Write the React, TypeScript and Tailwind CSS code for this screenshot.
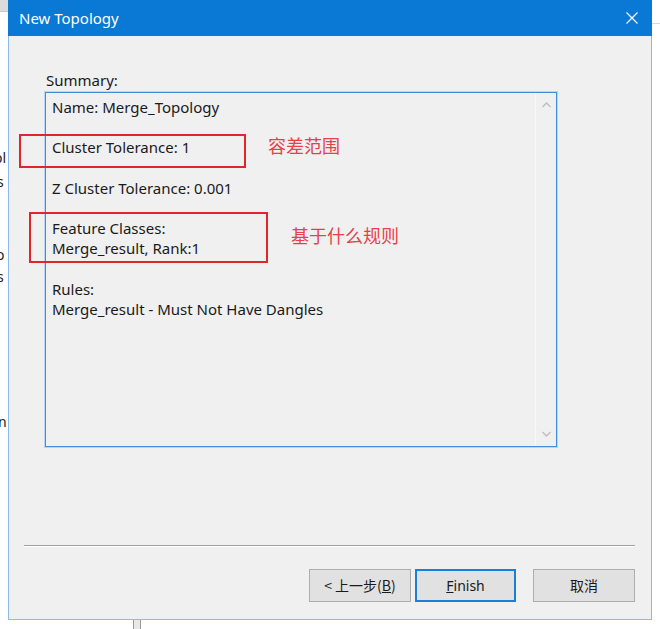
import React from "react";

const ui = { fontFamily: '"Noto Sans", "Open Sans", Arial, sans-serif' };
const cjk = { fontFamily: '"Noto Sans CJK SC", "Noto Sans", sans-serif' };

export default function App() {
  return (
    <div className="relative w-[660px] h-[629px] overflow-hidden bg-white" style={ui}>
      {/* background window fragments */}
      <div className="absolute left-0 top-0 w-[10px] h-[12px] bg-[#dcdcdc] border-b border-[#c8c8c8]" />
      <div className="absolute left-[652px] top-[23px] w-[8px] h-px bg-[#d8d8d8]" />
      <div className="absolute left-[-6px] top-[148px] text-[14px] leading-[20px] text-[#222]">ol</div>
      <div className="absolute left-[-3px] top-[172px] text-[14px] leading-[20px] text-[#222]">s</div>
      <div className="absolute left-[-4px] top-[245px] text-[14px] leading-[20px] text-[#222]">o</div>
      <div className="absolute left-[-3px] top-[267px] text-[14px] leading-[20px] text-[#222]">s</div>
      <div className="absolute left-[-2px] top-[412px] text-[14px] leading-[20px] text-[#222]">n</div>
      <div className="absolute left-[133px] top-[620px] w-[8px] h-[12px] border-x border-[#9a9a9a] bg-[#e8e8e8]" />

      {/* dialog */}
      <div className="absolute left-[8px] top-0 w-[644px] h-[620px] border border-t-0 border-[#8dbbe9] bg-[#f0f0f0] flex flex-col">
        <div className="h-[36px] bg-[#0a78d5] flex items-center justify-between pl-[11px] pr-[14px] -mx-px">
          <span className="text-white text-[15px] leading-none">New Topology</span>
          <svg width="12" height="12" viewBox="0 0 12 12">
            <path d="M0.5 0.5 L11.5 11.5 M11.5 0.5 L0.5 11.5" stroke="white" strokeWidth="1.2" />
          </svg>
        </div>

        <div className="flex-1 flex flex-col pt-[34px]">
          <div className="pl-[37px] text-[15px] leading-[20px] text-[#1a1a1a]">Summary:</div>
          <div className="ml-[36px] mt-[2px] w-[512px] h-[355px] border border-[#3f8ee0] outline outline-1 outline-[#b8d6f3] flex">
            <div className="flex-1 pl-[6px] pt-[4px] text-[15px] leading-[20.2px] text-[#1a1a1a]">
              <div>Name: Merge_Topology</div>
              <div className="h-[20.2px]" />
              <div>Cluster Tolerance: 1</div>
              <div className="h-[20.2px]" />
              <div>Z Cluster Tolerance: 0.001</div>
              <div className="h-[20.2px]" />
              <div>Feature Classes:</div>
              <div>Merge_result, Rank:1</div>
              <div className="h-[20.2px]" />
              <div>Rules:</div>
              <div>Merge_result - Must Not Have Dangles</div>
            </div>
            <div className="w-[21px] border-l border-[#f8f8f8] bg-[#f0f0f0] flex flex-col items-center justify-between py-[9px]">
              <svg width="9" height="6" viewBox="0 0 9 6">
                <path d="M0.5 5 L4.5 1 L8.5 5" fill="none" stroke="#bdbdbd" strokeWidth="1.3" />
              </svg>
              <svg width="9" height="6" viewBox="0 0 9 6">
                <path d="M0.5 1 L4.5 5 L8.5 1" fill="none" stroke="#bdbdbd" strokeWidth="1.3" />
              </svg>
            </div>
          </div>

          <div className="mt-[98px] mx-[15px] mr-[16px] h-px bg-[#a0a0a0] border-b border-white box-content" />

          <div className="mt-[22px] flex justify-end pr-[16px] text-[14px] text-[#1a1a1a]">
            <button className="w-[102px] h-[33px] bg-[#e1e1e1] border border-[#adadad] flex items-center justify-center" style={cjk}>
              &lt;&nbsp;上一步(<span className="underline">B</span>)
            </button>
            <button className="ml-[4px] w-[101px] h-[33px] bg-[#e1e1e1] border-2 border-[#1b7fd9] flex items-center justify-center" style={ui}>
              <span className="underline">F</span>inish
            </button>
            <button className="ml-[17px] w-[102px] h-[33px] bg-[#e1e1e1] border border-[#adadad] flex items-center justify-center" style={cjk}>
              取消
            </button>
          </div>
        </div>
      </div>

      {/* annotations */}
      <div className="absolute left-[19px] top-[134px] w-[227px] h-[34px] border-2 border-[#e0262b]" />
      <div className="absolute left-[29px] top-[212px] w-[239px] h-[51px] border-2 border-[#e0262b]" />
      <div className="absolute left-[268px] top-[133px] text-[18px] leading-[24px] text-[#e8404a]" style={cjk}>容差范围</div>
      <div className="absolute left-[291px] top-[223px] text-[18px] leading-[24px] text-[#e8404a]" style={cjk}>基于什么规则</div>
    </div>
  );
}
